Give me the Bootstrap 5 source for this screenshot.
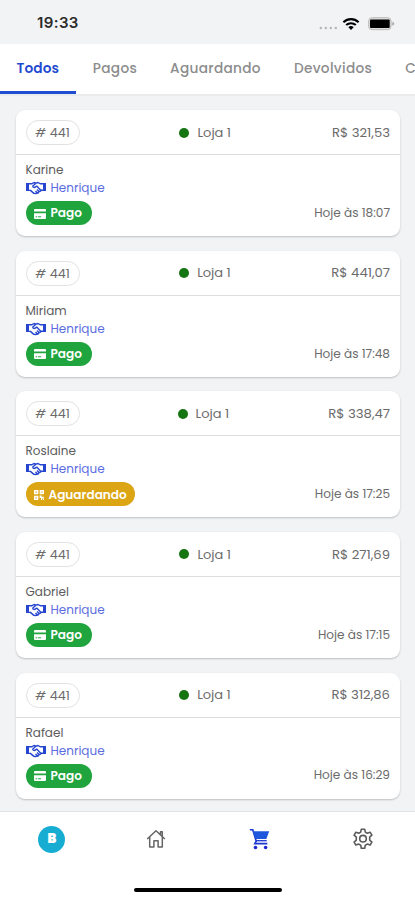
<!DOCTYPE html>
<html lang="pt-BR">
<head>
<meta charset="utf-8">
<meta name="viewport" content="width=device-width, initial-scale=1">
<title>Pedidos</title>
<link href="https://cdn.jsdelivr.net/npm/bootstrap@5.3.0/dist/css/bootstrap.min.css" rel="stylesheet">
<style>
body{font-family:Poppins,Inter,sans-serif;background:#f1f3f5;color:#6b6b6b;height:900px;overflow:hidden}
.status{height:44px;padding:3px 20px 0 37px;color:#2a2a2a}
.clock{font-family:Inter,sans-serif;font-size:15px;font-weight:600;letter-spacing:.4px}
.tabs{height:52px;background:#fff;border-bottom:2px solid #e9ebed;overflow:hidden}
.tabs a{height:51px;padding:0 16.5px;font-size:13.7px;font-weight:500;letter-spacing:.31px;color:#8c8c8c;text-decoration:none;flex:none;line-height:49px;white-space:nowrap}
.tabs a.on{color:#1f4bd0;border-bottom:4px solid #1f4fd0;width:76.3px;font-weight:600;letter-spacing:.12px}
.orders{padding:14px 15px 0 16px;gap:14.65px;height:715px;overflow:hidden}
.order{height:126px;flex:none;border:0;border-radius:9px;background:#fff;box-shadow:0 1px 2px rgba(0,0,0,.22)}
.order-head{height:45px;border-bottom:1px solid #dedede;padding:1px 10px 0 9.5px}
.num{width:54px;height:25px;border:1px solid #e2e2e2;font-size:12.7px}
.num i{margin-right:4px}
.dot{width:10px;height:10px;background:#147512}
.shop{gap:8px;font-size:13px;margin-right:1px}
.price{font-size:13.2px}
.order-body{padding:6px 10px 0 9.5px}
.client{font-size:12px;line-height:18px;color:#5c5c5c}
.seller{font-size:12px;line-height:18px;color:#5c6de0;gap:5px}
.pill{height:24px;background:#20a43e;color:#fff;font-size:12.1px;font-weight:600;padding:1px 10px 0 8px;gap:5px}
.pill.wait{background:#dba514;padding-right:8px}
.when{font-size:12.1px}
.bottom{height:89px;background:#fff;border-top:1px solid #dfe3e6}
.bottom-row{height:54px}
.avatar{width:27px;height:27px;background:#17add3;color:#fff;font-size:13px;font-weight:900}
.homebar{width:148px;height:4px;background:#000;margin-top:22px}
svg{display:block;flex:none}
</style>
</head>
<body>
<svg width="0" height="0" class="position-absolute">
<symbol id="shake" viewBox="0 0 20 14"><path d="M0 2h3v8H0zM17 2h3v8h-3z" fill="#2746cf"/><path d="M3 2.8h2.7L8 1.5l2 .7 2-.7 2.5 1.3H17M3 9.4h1.4l3.5 3 1.4.1 1.2-.3 1.5-.2 1-1.3 1.4-.5.7-.9H17M10 2.3 6.8 5c-.2 1.4 1.6 2 2.8.8l1.1-.7 4 4.2M9.5 10l1.8 1.8M11 8.5l2 2" fill="none" stroke="#2746cf" stroke-width="1.4" stroke-linejoin="round"/></symbol>
<symbol id="cardpay" viewBox="0 0 12 10"><path d="M1 0h10q1 0 1 1v1.5H0V1q0-1 1-1zM0 4.3h12V9q0 1-1 1H1Q0 10 0 9z" fill="#fff"/><path d="M1.6 7.8h1.6M4.1 7.8h3" stroke="#20a43e"/></symbol>
<symbol id="qr" viewBox="0 0 10 10"><path d="M.7.7h3v3h-3zM6.3.7h3v3h-3zM.7 6.3h3v3h-3z" fill="#fff" fill-opacity=".5" stroke="#fff" stroke-width="1.3"/><path d="M5.6 5.6h2v1.2h2.4v1.6H8.2V10H7V8H5.6zM9 9h1v1H9z" fill="#fff"/></symbol>
</svg>
<header class="status d-flex justify-content-between align-items-center">
<span class="clock">19:33</span>
<div class="d-flex align-items-center">
<svg width="19" height="14" viewBox="0 0 19 14"><g fill="#b5b5b5"><circle cx="1.8" cy="11" r="1.2"/><circle cx="6.8" cy="11" r="1.2"/><circle cx="11.8" cy="11" r="1.2"/><circle cx="16.8" cy="11" r="1.2"/></g></svg>
<svg class="mx-1" width="18" height="14" viewBox="0 0 18 14"><g fill="none" stroke="#000" stroke-width="2.1"><path d="M1.4 5.2a11 11 0 0 1 15.2 0M4.2 8.1a7 7 0 0 1 9.6 0"/></g><path d="m6.3 10.2 2.7 2.7 2.7-2.7a4 4 0 0 0-5.4 0z"/></svg>
<svg class="ms-1" width="27" height="14" viewBox="0 0 27 14"><rect x=".6" y=".7" width="22.5" height="12" rx="3.5" fill="#ddd" stroke="#bbb"/><rect x="2" y="2.6" width="19.7" height="8.4" rx="1"/><path d="M24.3 4.8q2 .5 2 2t-2 2z" fill="#aaa"/></svg>
</div>
</header>
<nav class="tabs d-flex" id="tabs">
<a href="#" class="on">Todos</a><a href="#">Pagos</a><a href="#">Aguardando</a><a href="#">Devolvidos</a><a href="#">C</a>
</nav>
<main class="orders d-flex flex-column" id="orders"></main>
<footer class="bottom">
<div class="bottom-row row g-0 align-items-center">
<div class="col d-flex justify-content-center"><span class="avatar rounded-circle d-flex align-items-center justify-content-center">B</span></div>
<div class="col d-flex justify-content-center"><svg width="20" height="20" viewBox="0 0 20 20" fill="none" stroke="#666" stroke-width="1.5" stroke-linejoin="round"><path d="M1.2 10 10 1.8l8.8 8.2M14.5 5.6V2.8h1.8v4.5M3.7 8v10h4.2v-6.3h4.2V18h4.2V8"/></svg></div>
<div class="col d-flex justify-content-center"><svg width="21" height="22" viewBox="0 0 21 22"><path d="M.8 1.8h3l3.4 11.4-1.4 2.4h12.5" fill="none" stroke="#1f38d0" stroke-width="1.6"/><path d="M3.7 3.3h16.5L17.3 11H6.4z" fill="#1f57dc"/><path d="M7 12.7h10.7" stroke="#1f38d0" stroke-width="1.3"/><circle cx="6.5" cy="19.5" r="1.8" fill="#1f28d0"/><circle cx="16.6" cy="19.5" r="1.8" fill="#1f28d0"/></svg></div>
<div class="col d-flex justify-content-center"><svg width="22" height="22" viewBox="0 0 22 22" fill="none" stroke="#5c5c5c" stroke-width="1.6" stroke-linejoin="round"><path d="M9.3 1.2h3.4l.6 2.9 2 1.1 2.8-1 1.8 3-2.2 2v2.9l2.2 2-1.8 3-2.8-1-2 1.1-.6 3.1H9.3l-.6-3.1-2-1.1-2.8 1-1.8-3 2.2-2V9.2l-2.2-2 1.8-3 2.8 1 2-1.1z"/><circle cx="11" cy="10.7" r="3.3"/></svg></div>
</div>
<div class="homebar rounded-pill mx-auto"></div>
</footer>
<script>
const orders = [
  ['Karine','321,53','18:07'],
  ['Miriam','441,07','17:48'],
  ['Roslaine','338,47','17:25',true],
  ['Gabriel','271,69','17:15'],
  ['Rafael','312,86','16:29']
];
document.getElementById('orders').innerHTML = orders.map(([name,value,time,waiting]) => `
<article class="order">
  <div class="order-head d-flex justify-content-between align-items-center">
    <span class="num rounded-pill d-flex align-items-center justify-content-center"><i>#</i>441</span>
    <span class="shop d-flex align-items-center"><i class="dot rounded-circle"></i>Loja 1</span>
    <span class="price">R$ ${value}</span>
  </div>
  <div class="order-body">
    <div class="client">${name}</div>
    <div class="seller d-flex align-items-center"><svg width="20" height="14"><use href="#shake"/></svg>Henrique</div>
    <div class="d-flex justify-content-between align-items-center mt-1">
      <span class="pill rounded-pill d-flex align-items-center ${waiting?'wait':''}">${waiting?'<svg width="10" height="10"><use href="#qr"/></svg>Aguardando':'<svg width="12" height="10"><use href="#cardpay"/></svg>Pago'}</span>
      <span class="when">Hoje às ${time}</span>
    </div>
  </div>
</article>`).join('');
</script>
<script src="https://cdn.jsdelivr.net/npm/bootstrap@5.3.0/dist/js/bootstrap.bundle.min.js"></script>
</body>
</html>
